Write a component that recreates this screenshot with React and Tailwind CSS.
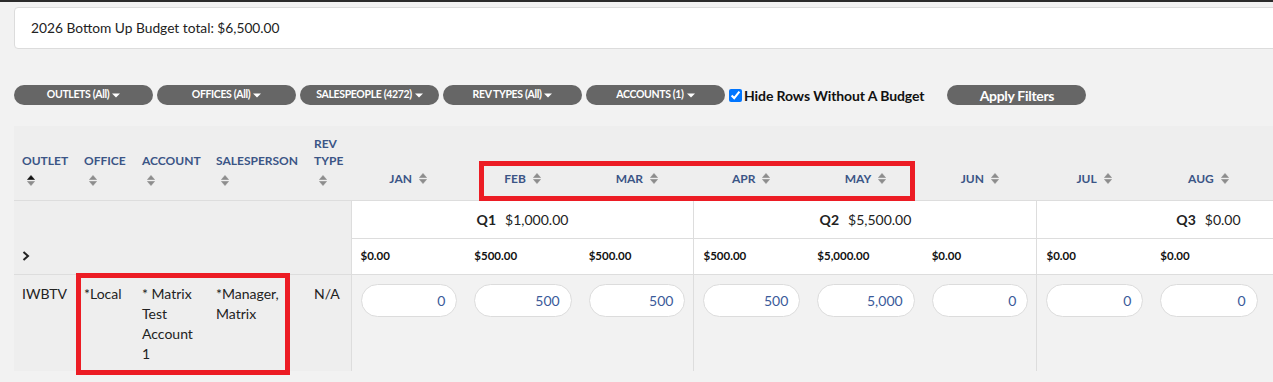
import React from "react";

const SortIcon = ({ active = false }) => (
  <svg width="8" height="11" viewBox="0 0 8 11" className="inline-block align-middle">
    <path d="M4 0.5 L7.5 4.5 H0.5 Z" fill={active ? "#111111" : "#8c8c8c"} strokeLinejoin="round" stroke={active ? "#111111" : "#8c8c8c"} strokeWidth="0.6" />
    <path d="M4 10.5 L7.5 6.5 H0.5 Z" fill="#8c8c8c" strokeLinejoin="round" stroke="#8c8c8c" strokeWidth="0.6" />
  </svg>
);

const Caret = () => (
  <svg width="8" height="5" viewBox="0 0 8 5" className="inline-block">
    <path d="M0 0.5 H8 L4 4.5 Z" fill="#ffffff" />
  </svg>
);

const filters = ["OUTLETS (All)", "OFFICES (All)", "SALESPEOPLE (4272)", "REV TYPES (All)", "ACCOUNTS (1)"];

const months = [
  { m: "JAN", total: "$0.00", val: "0" },
  { m: "FEB", total: "$500.00", val: "500" },
  { m: "MAR", total: "$500.00", val: "500" },
  { m: "APR", total: "$500.00", val: "500" },
  { m: "MAY", total: "$5,000.00", val: "5,000" },
  { m: "JUN", total: "$0.00", val: "0" },
  { m: "JUL", total: "$0.00", val: "0" },
  { m: "AUG", total: "$0.00", val: "0" },
  { m: "SEP", total: "$0.00", val: "0" },
  { m: "OCT", total: "$0.00", val: "0" },
  { m: "NOV", total: "$0.00", val: "0" },
  { m: "DEC", total: "$0.00", val: "0" },
];

const quarters = [
  { q: "Q1", amt: "$1,000.00" },
  { q: "Q2", amt: "$5,500.00" },
  { q: "Q3", amt: "$0.00" },
  { q: "Q4", amt: "$0.00" },
];

const leftCols = [
  { label: ["OUTLET"], active: true },
  { label: ["OFFICE"] },
  { label: ["ACCOUNT"] },
  { label: ["SALESPERSON"] },
  { label: ["REV", "TYPE"] },
];

const dataCell = "bg-[#eeeeee] pl-[8px] pt-[9px] pb-[7px] text-[14px] leading-[20px] text-[#222]";

export default function App() {
  return (
    <div className="relative w-[1273px] h-[382px] overflow-hidden bg-[#f2f2f2] font-['Lato','Noto_Sans',sans-serif] text-[#222]">
      <div className="h-[2px] bg-[#2b2b2b]" />
      <div className="pl-[14px] pt-[5px]">
        <div className="w-[1300px] h-[42px] bg-white border border-[#dcdcdc] rounded-[4px] flex items-center pl-[16px] text-[13.75px] text-[#222]">
          2026 Bottom Up Budget total: $6,500.00
        </div>
      </div>

      <div className="flex items-center pl-[14px] mt-[36px] h-[20px]">
        <div className="flex gap-[4px]">
          {filters.map((f) => (
            <div
              key={f}
              className="w-[139px] h-[20px] rounded-full bg-[#666666] text-white text-[10.5px] font-bold tracking-[-0.35px] flex items-center justify-center gap-[3px]"
            >
              <span>{f.replace("(All)", "").toUpperCase()}{f.includes("(All)") ? "(All)" : ""}</span>
              <Caret />
            </div>
          ))}
        </div>
        <label className="flex items-center ml-[4px] text-[14px] font-bold text-[#111] tracking-[-0.1px]">
          <input type="checkbox" defaultChecked className="w-[13px] h-[13px] m-0 mr-[2px] accent-[#0075ff]" />
          Hide Rows Without A Budget
        </label>
        <div className="ml-[23px] w-[139px] h-[20px] rounded-full bg-[#666666] text-white text-[14px] font-bold tracking-[-0.3px] flex items-center justify-center">
          Apply Filters
        </div>
      </div>

      <div className="pl-[14px] mt-[21px]">
        <table className="table-fixed border-collapse w-[1709px]">
          <colgroup>
            <col className="w-[62px]" />
            <col className="w-[58px]" />
            <col className="w-[74px]" />
            <col className="w-[98px]" />
            <col className="w-[45px]" />
            {months.map((m) => (
              <col key={m.m} className="w-[114.33px]" />
            ))}
          </colgroup>
          <thead>
            <tr className="h-[74px] bg-[#eeeeee]">
              {leftCols.map((c, i) => (
                <th
                  key={i}
                  className="align-bottom text-left pl-[8px] pr-[2px] pb-[8px] border-b border-[#dddddd] text-[12px] font-bold leading-[17px] text-[#3b5586]"
                >
                  {c.label.map((l) => (
                    <div key={l}>{l}</div>
                  ))}
                  <div className="h-[23px] flex items-center pl-[5px]">
                    <SortIcon active={c.active} />
                  </div>
                </th>
              ))}
              {months.map((m) => (
                <th
                  key={m.m}
                  className="align-bottom text-center pb-[13px] border-b border-[#dddddd] text-[12px] font-bold leading-[17px] text-[#3b5586]"
                >
                  <span className="inline-flex items-center gap-[7px] h-[17px]">
                    {m.m}
                    <SortIcon />
                  </span>
                </th>
              ))}
            </tr>
          </thead>
          <tbody>
            <tr className="h-[38px]">
              <td colSpan={5} className="bg-[#eeeeee]" />
              {quarters.map((q) => (
                <td
                  key={q.q}
                  colSpan={3}
                  className="bg-white border-l border-b border-[#dddddd] text-center text-[14px] text-[#222]"
                >
                  <span className="font-bold mr-[9px]">{q.q}</span>
                  {q.amt}
                </td>
              ))}
            </tr>
            <tr className="h-[36px]">
              <td colSpan={5} className="bg-[#eeeeee] border-b border-[#dddddd] pl-[8px]">
                <svg width="8" height="10" viewBox="0 0 8 10" className="block">
                  <path d="M1.5 1 L6 5 L1.5 9" fill="none" stroke="#222" strokeWidth="2" />
                </svg>
              </td>
              {months.map((m, i) => (
                <td
                  key={m.m}
                  className={`bg-white border-b border-[#dddddd] pl-[9px] text-[11.5px] font-bold text-[#111] ${i % 3 === 0 ? "border-l" : ""}`}
                >
                  {m.total}
                </td>
              ))}
            </tr>
            <tr className="align-top">
              <td className={`${dataCell} pr-[2px]`}>IWBTV</td>
              <td className={`${dataCell} pr-[2px]`}>*Local</td>
              <td className={`${dataCell} pr-[8px]`}>* Matrix Test Account 1</td>
              <td className={`${dataCell} pr-[2px]`}>*Manager, Matrix</td>
              <td className={`${dataCell} pr-[2px]`}>N/A</td>
              {months.map((m, i) => (
                <td key={m.m} className={`pl-[9px] pr-[8px] pt-[9px] border-[#dddddd] ${i % 3 === 0 ? "border-l" : ""}`}>
                  <div className="h-[33px] w-full rounded-full bg-white border border-[#dcdcdc] flex items-center justify-end pr-[11px] text-[14px] text-[#3a5a9a]">
                    {m.val}
                  </div>
                </td>
              ))}
            </tr>
          </tbody>
        </table>
      </div>

      <div className="absolute left-[479px] top-[161px] w-[436px] h-[40px] border-[5px] border-[#ec1c24] pointer-events-none" />
      <div className="absolute left-[76px] top-[273px] w-[214px] h-[102px] border-[5px] border-[#ec1c24] pointer-events-none" />
    </div>
  );
}
